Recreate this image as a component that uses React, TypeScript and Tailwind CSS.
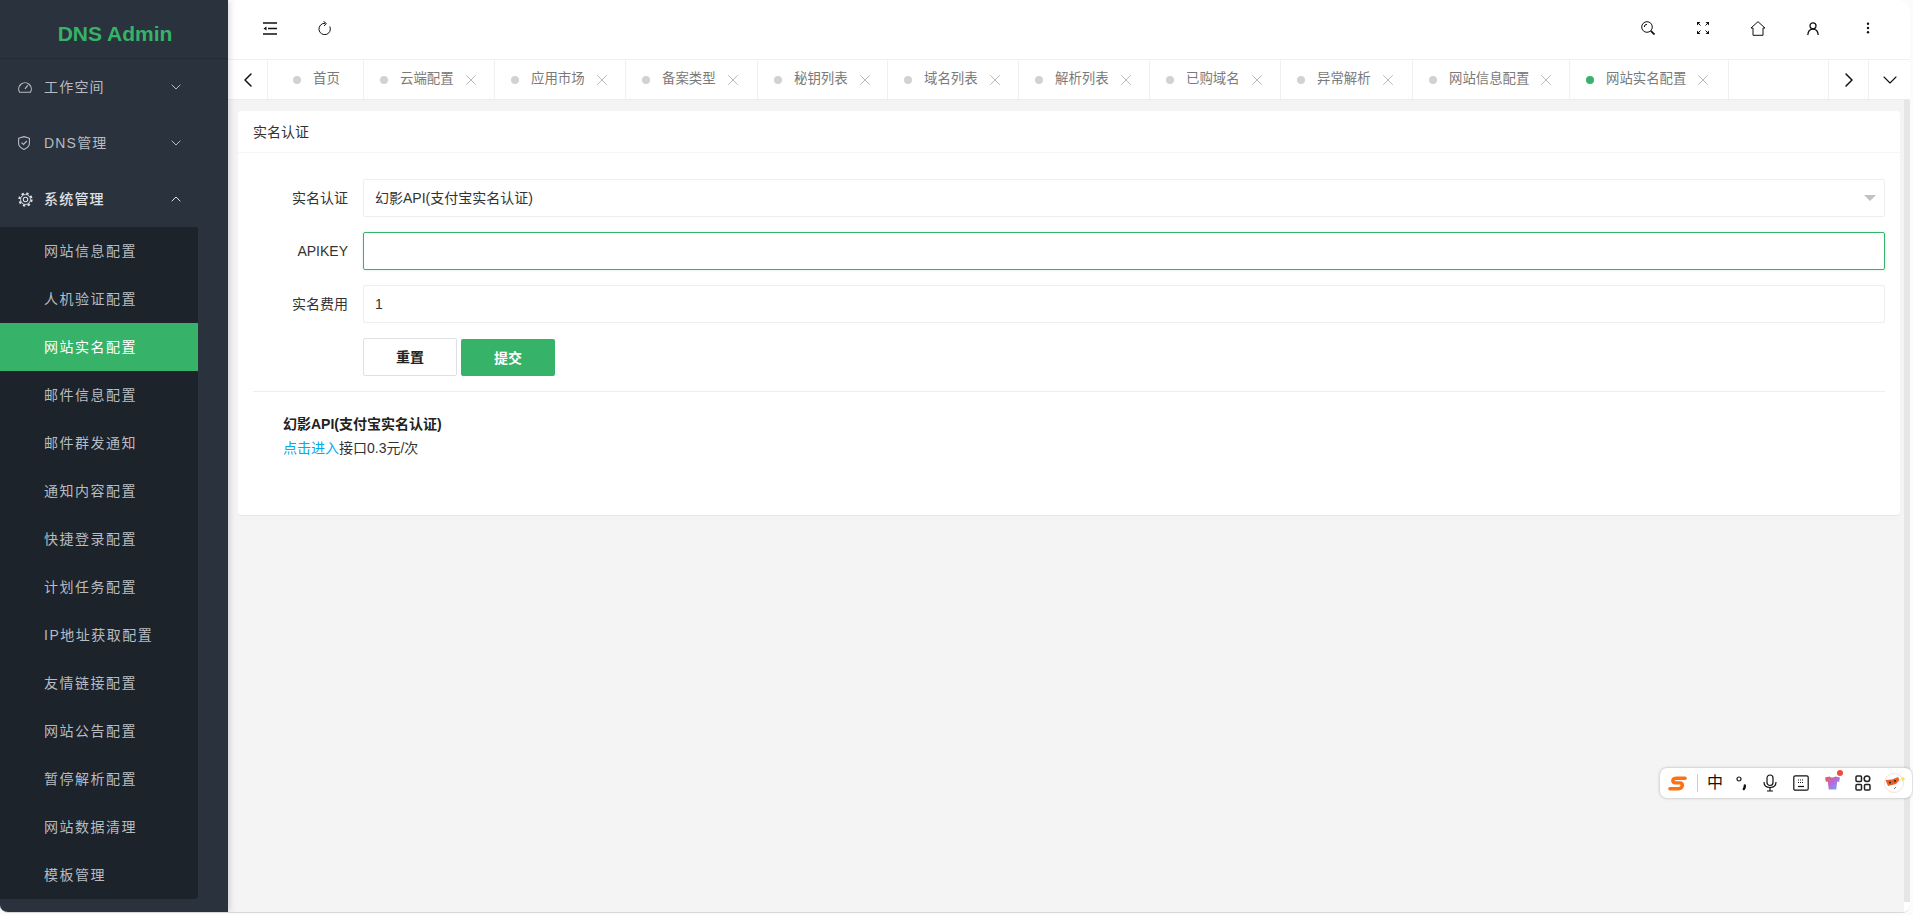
import React from 'react';
import { ChevronDown, ChevronLeft, ChevronRight, ChevronUp, X } from 'lucide-react';

const subMenu = [
  '网站信息配置', '人机验证配置', '网站实名配置', '邮件信息配置', '邮件群发通知', '通知内容配置', '快捷登录配置',
  '计划任务配置', 'IP地址获取配置', '友情链接配置', '网站公告配置', '暂停解析配置', '网站数据清理', '模板管理',
];

const tabs = [
  { name: '首页', width: 'w-[96px]', closable: false },
  { name: '云端配置', width: 'w-[131px]', closable: true },
  { name: '应用市场', width: 'w-[131px]', closable: true },
  { name: '备案类型', width: 'w-[132px]', closable: true },
  { name: '秘钥列表', width: 'w-[130px]', closable: true },
  { name: '域名列表', width: 'w-[131px]', closable: true },
  { name: '解析列表', width: 'w-[131px]', closable: true },
  { name: '已购域名', width: 'w-[131px]', closable: true },
  { name: '异常解析', width: 'w-[132px]', closable: true },
  { name: '网站信息配置', width: 'w-[157px]', closable: true },
  { name: '网站实名配置', width: 'w-[159px]', closable: true, active: true },
];

const DashIcon = () => (
  <svg viewBox="0 0 14 12" className="w-[14px] h-[12px]" fill="none" stroke="currentColor" strokeWidth="1.100">
    <path d="M1.600 11.300A6.300 6.300 0 1 1 12.400 11.300Z" strokeLinejoin="round" />
    <path d="M7 7.800 9.800 4.400" strokeWidth="1.300" />
  </svg>
);

const ShieldIcon = () => (
  <svg viewBox="0 0 12 14" className="w-[12px] h-[14px]" fill="none" stroke="currentColor" strokeWidth="1.100">
    <path d="M6 .6 11.400 2.200v5.300c0 2.700-2.300 4.500-5.400 5.900C2.900 12 .6 10.200.6 7.500V2.200Z" strokeLinejoin="round" />
    <path d="M3.500 6.600 5.500 8.500 8.800 5" strokeWidth="1.200" />
  </svg>
);

const GearIcon = () => (
  <svg viewBox="0 0 16 16" className="w-[15px] h-[15px]" fill="none" stroke="currentColor">
    <circle cx="8" cy="8" r="6.600" strokeWidth="2" strokeDasharray="2.590 2.590" />
    <circle cx="8" cy="8" r="5.300" strokeWidth="1" />
    <circle cx="8" cy="8" r="2.400" strokeWidth="1.100" />
  </svg>
);

const MenuItem = ({ icon, label, open }: { icon: React.ReactNode; label: string; open?: boolean }) => (
  <div className={`h-14 flex items-center pl-[18px] pr-[44px] ${open ? 'text-[#e0e3e6]' : 'text-[#b8bcc1]'}`}>
    <span className="w-[26px] flex">{icon}</span>
    <span className={`flex-1 text-sm tracking-[1.2px] ${open ? 'font-medium' : ''}`}>{label}</span>
    {open ? <ChevronUp size={16} strokeWidth={1.500} /> : <ChevronDown size={16} strokeWidth={1.500} />}
  </div>
);

const Sidebar = () => (
  <aside className="relative z-10 w-[228px] shrink-0 bg-[#29323d] flex flex-col shadow-[2px_0_6px_rgba(0,0,0,0.14)]">
    <div className="h-[59px] border-b border-[#232b34] flex items-center justify-center pt-[9px] pl-[2px] text-[21px] font-bold text-[#36b368]">
      DNS Admin
    </div>
    <MenuItem icon={<DashIcon />} label="工作空间" />
    <MenuItem icon={<ShieldIcon />} label="DNS管理" />
    <MenuItem icon={<GearIcon />} label="系统管理" open />
    <div className="w-[198px] bg-[#1c232b] rounded-br-sm">
      {subMenu.map((item, i) => (
        <div
          key={item}
          className={`h-12 flex items-center pl-[44px] text-sm tracking-[1.5px] ${i === 2 ? 'bg-[#36b368] text-white' : 'text-[#b8bcc1]'}`}
        >
          {item}
        </div>
      ))}
    </div>
  </aside>
);

const TopBar = () => (
  <div className="h-[60px] shrink-0 bg-white border-b border-[#f0f0f0] flex items-center pl-[35px] pr-[15px] pb-[3px] text-[#111]">
    <svg viewBox="0 0 14 13" className="w-[14px] h-[13px]" fill="none" stroke="currentColor" strokeWidth="1.400">
      <path d="M0 1h14M5 6.500h9M0 12h14" />
      <path d="M3.500 4.500 .5 6.500l3 2Z" fill="currentColor" stroke="none" />
    </svg>
    <svg viewBox="0 0 13 14" className="w-[13px] h-[14px] ml-[41px]" fill="none" stroke="currentColor" strokeWidth="1">
      <path d="M11.800 5.500A5.700 5.700 0 1 1 7 2.300" />
      <path d="M5.500.3 8.300 2.500 6 5" />
    </svg>
    <div className="ml-auto flex items-center">
      <span className="w-[55px] flex justify-center">
        <svg viewBox="0 0 14 14" className="w-[14px] h-[14px]" fill="none" stroke="currentColor" strokeWidth="1">
          <circle cx="6" cy="6" r="5.300" />
          <path d="M3.300 6a2.700 2.700 0 0 1 2.700-2.700" />
          <path d="M9.800 9.800 13.500 13.500" strokeWidth="1.800" />
        </svg>
      </span>
      <span className="w-[55px] flex justify-center">
        <svg viewBox="0 0 12 12" className="w-[12px] h-[12px]" fill="none" stroke="currentColor" strokeWidth="1">
          <path d="M3.500 3.500 1 1M8.500 3.500 11 1M3.500 8.500 1 11M8.500 8.500 11 11" />
          <path d="M0 3.500V0h3.500ZM12 3.500V0H8.500ZM0 8.500V12h3.500ZM12 8.500V12H8.500Z" fill="currentColor" stroke="none" />
        </svg>
      </span>
      <span className="w-[55px] flex justify-center">
        <svg viewBox="0 0 16 15" className="w-[16px] h-[15px]" fill="none" stroke="currentColor" strokeWidth="1">
          <path d="M8 .7 15 7h-2v7.300H3V7H1Z" strokeLinejoin="round" />
        </svg>
      </span>
      <span className="w-[55px] flex justify-center">
        <svg viewBox="0 0 12 13" className="w-[12px] h-[13px]" fill="none" stroke="currentColor" strokeWidth="1.300">
          <circle cx="6" cy="3.800" r="3" />
          <path d="M.8 13c.3-3.500 2.400-5.800 5.200-5.800s4.900 2.300 5.200 5.800" />
        </svg>
      </span>
      <span className="w-[55px] flex justify-center">
        <svg viewBox="0 0 4 14" className="w-[4px] h-[12px]" fill="currentColor">
          <circle cx="2" cy="2" r="1.400" />
          <circle cx="2" cy="7" r="1.400" />
          <circle cx="2" cy="12" r="1.400" />
        </svg>
      </span>
    </div>
  </div>
);

const TabBar = () => (
  <div className="h-10 shrink-0 bg-white border-b border-[#ececec] flex items-stretch text-[13.4px] text-[#7a7a7a]">
    <div className="w-10 shrink-0 flex items-center justify-center border-r border-[#f0f0f0] text-[#111]">
      <ChevronLeft size={24} strokeWidth={1.500} />
    </div>
    {tabs.map((tab) => (
      <div
        key={tab.name}
        className={`${tab.width} shrink-0 flex items-center whitespace-nowrap border-r border-[#f0f0f0] ${tab.closable ? 'pl-[16px]' : 'pl-[25px]'}`}
      >
        <span className={`w-2 h-2 rounded-full mr-[12px] ${tab.active ? 'bg-[#36b368]' : 'bg-[#d2d2d2]'}`} />
        <span>{tab.name}</span>
        {tab.closable && <X size={18} strokeWidth={1.100} className="ml-[8px] text-[#aaa]" />}
      </div>
    ))}
    <div className="flex-1 border-r border-[#f0f0f0]" />
    <div className="w-10 shrink-0 flex items-center justify-center border-r border-[#f0f0f0] text-[#111]">
      <ChevronRight size={24} strokeWidth={1.500} />
    </div>
    <div className="flex-1 max-w-[41px] shrink-0 flex items-center justify-center text-[#111]">
      <ChevronDown size={24} strokeWidth={1.100} />
    </div>
  </div>
);

const Field = ({ label, children }: { label: string; children: React.ReactNode }) => (
  <div className="flex items-center h-[38px] mb-[15px]">
    <label className="w-[110px] pr-[15px] text-right text-sm text-[#333] shrink-0">{label}</label>
    {children}
  </div>
);

const Card = () => (
  <div className="bg-white h-[405px] border-b border-[#e6e6e6] rounded-sm">
    <div className="h-[42px] border-b border-[#f6f6f6] flex items-center pl-[15px] text-sm text-[#333]">实名认证</div>
    <div className="pt-[26px] px-[15px]">
      <Field label="实名认证">
        <div className="flex-1 h-[38px] border border-[#eee] rounded-[2px] flex items-center pl-[11px] text-sm text-[#333] relative">
          幻影API(支付宝实名认证)
          <span className="absolute right-[8px] top-[15px] border-x-[6px] border-x-transparent border-t-[6px] border-t-[#c2c2c2]" />
        </div>
      </Field>
      <Field label="APIKEY">
        <input className="flex-1 h-[38px] border border-[#36b368] rounded-[2px] shadow-[0_0_2px_1px_rgba(54,179,104,0.12)] outline-none" />
      </Field>
      <Field label="实名费用">
        <div className="flex-1 h-[38px] border border-[#eee] rounded-[2px] flex items-center pl-[11px] text-sm text-[#333]">1</div>
      </Field>
      <div className="flex pl-[110px] gap-[4px]">
        <button className="w-[94px] h-[38px] bg-white border border-[#e0e0e4] rounded-[2px] text-sm font-bold text-[#222]">重置</button>
        <button className="w-[94px] h-[37px] mt-px bg-[#36b368] rounded-[2px] text-sm font-bold text-white">提交</button>
      </div>
      <div className="mt-[15px] border-t border-[#eee] pt-[20px] pl-[30px] text-sm leading-[24px] text-[#333]">
        <div className="font-bold text-[#222]">幻影API(支付宝实名认证)</div>
        <div>
          <span className="text-[#01aaed]">点击进入</span>接口0.3元/次
        </div>
      </div>
    </div>
  </div>
);

const SogouBar = () => (
  <div className="absolute left-[1660px] top-[768px] w-[252px] h-[30px] bg-white rounded-[7px] shadow-[0_0_3px_rgba(0,0,0,0.3)] flex items-center text-[#111]">
    <svg viewBox="0 0 20 17" className="w-[19px] h-[17px] ml-[8px]" fill="none" stroke="#f97316" strokeWidth="3.600">
      <path d="M18 3H9C5 3 3.500 6.500 7 7.800h6c3.500 1 2.500 6-2 6.200H2" strokeLinecap="round" strokeLinejoin="round" />
    </svg>
    <span className="w-px h-[18px] bg-[#ccc] ml-[10px]" />
    <span className="ml-[9px] w-[16px] text-[16px] leading-none">中</span>
    <svg viewBox="0 0 11 16" className="w-[11px] h-[16px] ml-[13px]" fill="none" stroke="#111">
      <circle cx="3" cy="4" r="2" strokeWidth="1.200" />
      <path d="M8.800 10.500c.2 1.500-.2 2.500-1 3.500" strokeWidth="2.400" strokeLinecap="round" />
    </svg>
    <svg viewBox="0 0 16 18" className="w-[16px] h-[18px] ml-[15px]" fill="none" stroke="#111" strokeWidth="1.200">
      <rect x="5" y="1" width="6" height="10.500" rx="3" />
      <path d="M2 8c0 3.500 2.500 5.500 6 5.500s6-2 6-5.500M8 13.500V17M5 17h6" />
    </svg>
    <svg viewBox="0 0 16 16" className="w-[16px] h-[16px] ml-[15px]" fill="none" stroke="#111" strokeWidth="1.200">
      <rect x=".8" y=".8" width="14.400" height="14.400" rx="1.500" />
      <path d="M5 5h6M5 7.500h6" strokeDasharray="1 1" />
      <path d="M5 11.500h6" />
    </svg>
    <span className="relative ml-[16px] w-[15px] h-[16px] flex">
      <svg viewBox="0 0 16 16" className="w-[15px] h-[16px]">
        <defs>
          <linearGradient id="shirt" x1="0" y1="0" x2="1" y2="1">
            <stop offset="0" stopColor="#f0584a" />
            <stop offset="0.500" stopColor="#b66be0" />
            <stop offset="1" stopColor="#58b8f8" />
          </linearGradient>
        </defs>
        <path d="M0 2 5 1c1 1.500 4 1.500 6 0l5 1-1 5-2-.5-1 8.500H4L3 6.500 1 7Z" fill="url(#shirt)" />
      </svg>
      <span className="absolute -top-[5px] right-[-3px] w-[6px] h-[6px] rounded-full bg-[#f04c3a]" />
    </span>
    <svg viewBox="0 0 16 16" className="w-[16px] h-[16px] ml-[15px]" fill="none" stroke="#222" strokeWidth="1.500">
      <rect x="1" y="1" width="5.500" height="5.500" rx="1" />
      <circle cx="12" cy="3.800" r="2.800" />
      <rect x="1" y="9.500" width="5.500" height="5.500" rx="1" />
      <rect x="9.500" y="9.500" width="5.500" height="5.500" rx="1" />
    </svg>
    <svg viewBox="0 0 22 22" className="w-[22px] h-[22px] ml-[13px]">
      <circle cx="10" cy="11" r="9.500" fill="#fff" stroke="#f3e4df" strokeWidth="1" />
      <path d="M1.500 8 8 7.500l6-2.500 1.500 3L12 12l-8 2Z" fill="#e8622c" />
      <circle cx="6" cy="10.500" r="1" fill="#222" />
      <circle cx="11" cy="9" r="1" fill="#222" />
      <path d="M10 17l2-2" stroke="#777" strokeWidth="1" />
      <path d="M19 4l.8 2.200 2.200.8-2.200.8-.8 2.200-.8-2.200-2.200-.8 2.200-.8Z" fill="#f8e050" />
    </svg>
  </div>
);

export default function App() {
  return (
    <div
      className="relative w-[1913px] h-[915px] overflow-hidden bg-[#fbfbfb]"
      style={{ fontFamily: '"Liberation Sans", "Noto Sans CJK SC", sans-serif' }}
    >
      <div className="flex w-[1910px] h-[913px] border-b border-[#d8d8d8] bg-white overflow-hidden rounded-tr-xl rounded-b-lg">
        <Sidebar />
        <main className="flex-1 min-w-0 flex flex-col bg-[#f4f4f4]">
          <TopBar />
          <TabBar />
          <div className="flex-1 flex min-h-0">
            <div className="flex-1 pl-[10px] pr-[4px] pt-[11px]">
              <Card />
            </div>
            <div className="w-[6px] shrink-0 flex flex-col">
              <div className="flex-1 bg-[#e6e6e6]" />
              <div className="h-[10px] bg-white" />
            </div>
          </div>
        </main>
      </div>
      <SogouBar />
    </div>
  );
}
